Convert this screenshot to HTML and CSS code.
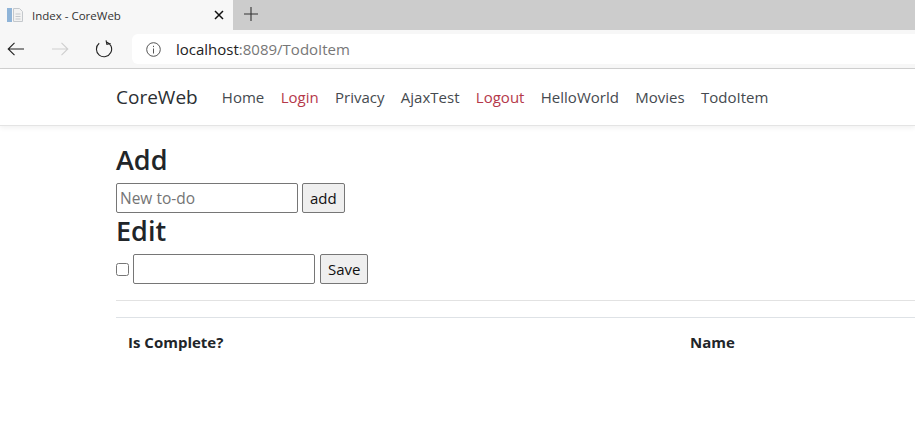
FILE: index.html
```html
<!DOCTYPE html>
<html lang="en">
<head>
<meta charset="utf-8">
<title>Index - CoreWeb</title>
<link rel="stylesheet" href="styles.css">
</head>
<body>
<header class="browser">
  <div class="tabstrip">
    <div class="tab">
      <svg class="favicon" width="18" height="16" viewBox="0 0 18 16"><rect x="1" y="1" width="5" height="14" fill="#8fb4d8"/><path d="M7.5 1.5h6l3 3v10h-9z" fill="#f2f2f2" stroke="#c4c8cc"/><path d="M9.500 7h5M9.500 9.500h5M9.500 12h5" stroke="#c4c8cc"/></svg>
      <span class="tab-title">Index - CoreWeb</span>
      <svg class="tab-close" width="10" height="10" viewBox="0 0 10 10"><path d="M1 1l8 8M9 1l-8 8" stroke="#111" stroke-width="1.5" fill="none"/></svg>
    </div>
    <svg class="new-tab" width="14" height="14" viewBox="0 0 14 14"><path d="M7 0v14M0 7h14" stroke="#333" stroke-width="1.1" fill="none"/></svg>
  </div>
  <div class="toolbar">
    <svg class="tool back" width="18" height="14" viewBox="0 0 18 14"><path d="M17 7H1M7.500 .8L1.200 7l6.300 6.200" stroke="#222" stroke-width="1.100" fill="none"/></svg>
    <svg class="tool forward" width="18" height="14" viewBox="0 0 18 14"><path d="M1 7h16M10.500 .8L16.800 7l-6.300 6.200" stroke="#cfcfcf" stroke-width="1.100" fill="none"/></svg>
    <svg class="tool reload" width="18" height="18" viewBox="0 0 18 18"><path d="M5.500 2.400A7.600 7.600 0 1 0 12.500 2.400M12.800 1v4h3.800" stroke="#222" stroke-width="1.100" fill="none" transform="rotate(-12 9 9)"/></svg>
    <div class="address">
      <svg class="info" width="15" height="15" viewBox="0 0 15 15"><circle cx="7.500" cy="7.500" r="6.800" stroke="#555" fill="none"/><path d="M7.500 6.500v5M7.500 3.800v1.300" stroke="#555" fill="none"/></svg>
      <span class="url"><span class="host">localhost</span>:8089/TodoItem</span>
    </div>
  </div>
</header>
<nav class="navbar">
  <a class="brand">CoreWeb</a>
  <ul class="links">
    <li>Home</li>
    <li class="danger">Login</li>
    <li>Privacy</li>
    <li>AjaxTest</li>
    <li class="danger">Logout</li>
    <li>HelloWorld</li>
    <li>Movies</li>
    <li>TodoItem</li>
  </ul>
</nav>
<main class="content">
  <h3>Add</h3>
  <form class="row">
    <input class="text" type="text" placeholder="New to-do">
    <button class="btn" type="button">add</button>
  </form>
  <h3>Edit</h3>
  <form class="row">
    <input class="check" type="checkbox">
    <input class="text" type="text">
    <button class="btn save" type="button">Save</button>
  </form>
  <hr class="rule">
  <div class="table-head">
    <div class="col-complete">Is Complete?</div>
    <div>Name</div>
  </div>
</main>
</body>
</html>
```
FILE: styles.css
```css
* { box-sizing: border-box; }
html, body { margin: 0; height: 422px; overflow: hidden; background: #fff; }
body { font-family: "Open Sans", "Noto Sans", sans-serif; font-size: 15px; color: #212529; }
.browser { height: 69px; background: #f7f7f7; border-bottom: 1px solid #d0d0d0; }
.tabstrip { height: 30px; background: #cccccc; display: flex; align-items: center; }
.tab { width: 233px; height: 30px; background: #f7f7f7; display: flex; align-items: center; padding-left: 6px; }
.favicon { flex: none; }
.tab-title { margin-left: 8px; font-size: 11.500px; color: #333; flex: 1; }
.tab-close { margin-right: 9px; }
.new-tab { margin-left: 11px; margin-top: -2px; }
.toolbar { height: 38px; display: flex; align-items: center; }
.tool { flex: none; }
.back { margin-left: 7px; }
.forward { margin-left: 26px; }
.reload { margin-left: 26px; margin-top: -1px; }
.address { margin-left: 19px; flex: 1; height: 30px; background: #fff; border-radius: 6px 0 0 6px; display: flex; align-items: center; padding-left: 14px; }
.url { margin-left: 15px; font-size: 15px; color: #777; }
.host { color: #222; }
.navbar { height: 57px; display: flex; align-items: center; padding-left: 116px; border-bottom: 1px solid #e4e4e4; box-shadow: 0 2px 5px rgba(0,0,0,.06); }
.brand { font-size: 19px; color: #2b2f33; margin-right: 16px; }
.links { list-style: none; margin: 0; padding: 0; display: flex; }
.links li { padding: 0 8.200px; font-size: 15px; color: #454a4f; white-space: nowrap; }
.links .danger { color: #b5384a; }
.content { padding: 18px 0 0 116px; }
h3 { margin: 0 0 6px; font-size: 27px; font-weight: 600; line-height: 31px; color: #212529; }
.row { display: flex; align-items: center; height: 34px; }
.text { width: 182px; height: 30px; border: 1px solid #767676; border-radius: 2px; padding: 1px 3px; font: 15px "Open Sans", sans-serif; background: #fff; }
.text::placeholder { color: #757575; font-size: 15.500px; }
.btn { margin-left: 4px; height: 30px; padding: 0 7px; border: 1px solid #767676; border-radius: 2px; background: #efefef; font: 15px "Open Sans", sans-serif; color: #111; }
.save { margin-left: 5px; }
.check { width: 13px; height: 13px; margin: 0 4px 0 0; }
.rule { border: 0; border-top: 1px solid #e2e2e2; margin: 14px 0 0; }
.table-head { margin-top: 16px; border-top: 1px solid #dee2e6; display: flex; padding: 12px; font-weight: 700; font-size: 15px; line-height: 24px; }
.col-complete { width: 562px; }
```
